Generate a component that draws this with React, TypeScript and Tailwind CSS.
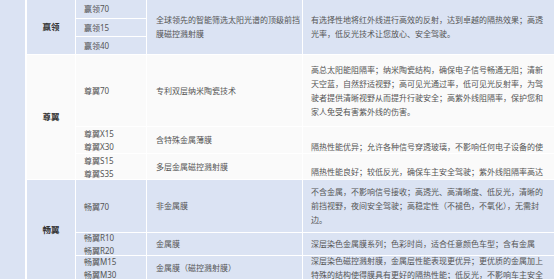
const font = { fontFamily: '"Noto Sans", "Noto Sans CJK SC", sans-serif' };

type Row = { models: string[]; tech: string; desc: string[]; descPad?: string };

const blue = "bg-[#dbe3f3]";
const white = "bg-[#fafafa]";

function Brand({ name, tone }: { name: string; tone: string }) {
  return (
    <div className={`${tone} row-span-3 flex items-center justify-center text-[8.5px] font-bold text-[#333]`}>
      {name}
    </div>
  );
}

function Group({
  brand,
  tone,
  rows,
  heights,
}: {
  brand: string;
  tone: string;
  rows: Row[];
  heights: string;
}) {
  return (
    <div className={`grid grid-cols-[48px_70px_155px_1fr] gap-px ${heights}`}>
      <Brand name={brand} tone={tone} />
      {rows.map((r, i) => (
        <Cells key={i} row={r} tone={tone} />
      ))}
    </div>
  );
}

function Cells({ row, tone }: { row: Row; tone: string }) {
  return (
    <>
      <div className={`${tone} flex flex-col justify-center overflow-hidden pl-[8px] text-[8px] leading-[13px] text-[#555]`}>
        {row.models.map((m) => (
          <span key={m}>{m}</span>
        ))}
      </div>
      <div className={`${tone} flex items-center overflow-hidden pl-[9px] text-[8px] leading-[14px] text-[#555]`}>
        <p className="w-[145px]">{row.tech}</p>
      </div>
      <div className={`${tone} flex items-center overflow-hidden pl-[8px] text-[8px] leading-[14px] text-[#555] ${row.descPad ?? ""}`}>
        <div className="w-[236px]">
          {row.desc.map((d) => (
            <p key={d}>{d}</p>
          ))}
        </div>
      </div>
    </>
  );
}

function SingleSpan({ row, tone }: { row: Row; tone: string }) {
  return (
    <>
      {row.models.map((m, i) => (
        <div
          key={m}
          className={`${tone} col-start-2 flex items-center pl-[8px] text-[8px] text-[#555]`}
          style={{ gridRowStart: i + 1 }}
        >
          {m}
        </div>
      ))}
      <div className={`${tone} col-start-3 row-span-3 row-start-1 flex items-center pl-[9px] text-[8px] leading-[14px] text-[#555]`}>
        <p className="w-[145px]">{row.tech}</p>
      </div>
      <div className={`${tone} col-start-4 row-span-3 row-start-1 flex items-center pl-[8px] text-[8px] leading-[14px] text-[#555]`}>
        <div className="w-[236px]">
          {row.desc.map((d) => (
            <p key={d}>{d}</p>
          ))}
        </div>
      </div>
    </>
  );
}

export default function App() {
  return (
    <div className="flex h-[279px] w-[554px] overflow-hidden bg-white" style={font}>
      <div className={`w-[25px] shrink-0 ${blue}`} />
      <div className="ml-[2px] flex flex-1 flex-col gap-px">
        <div className="grid grid-cols-[48px_70px_155px_1fr] grid-rows-[18px_17px_17px] gap-px">
          <div className={`${blue} col-start-1 row-span-3 row-start-1 flex items-center justify-center text-[8.5px] font-bold text-[#333]`}>
            赢领
          </div>
          <SingleSpan
            tone={blue}
            row={{
              models: ["赢领70", "赢领15", "赢领40"],
              tech: "全球领先的智能筛选太阳光谱的顶级前挡膜磁控溅射膜",
              desc: [
                "有选择性地将红外线进行高效的反射，达到卓越的隔热效果；高透",
                "光率，低反光技术让您放心、安全驾驶。",
              ],
            }}
          />
        </div>

        <Group
          brand="尊翼"
          tone={white}
          heights="grid-rows-[71px_26px_25px]"
          rows={[
            {
              models: ["尊翼70"],
              tech: "专利双层纳米陶瓷技术",
              desc: [
                "高总太阳能阻隔率；纳米陶瓷结构，确保电子信号畅通无阻；清新",
                "天空蓝，自然舒适视野；高可见光通过率，低可见光反射率，为驾",
                "驶者提供清晰视野从而提升行驶安全；高紫外线阻隔率，保护您和",
                "家人免受有害紫外线的伤害。",
              ],
            },
            {
              models: ["尊翼X15", "尊翼X30"],
              tech: "含特殊金属薄膜",
              desc: ["隔热性能优异；允许各种信号穿透玻璃，不影响任何电子设备的使"],
              descPad: "pt-[14px]",
            },
            {
              models: ["尊翼S15", "尊翼S35"],
              tech: "多层金属磁控溅射膜",
              desc: ["隔热性能良好；较低反光，确保车主安全驾驶；紫外线阻隔率高达"],
              descPad: "pt-[10px]",
            },
          ]}
        />

        <Group
          brand="畅翼"
          tone={blue}
          heights="grid-rows-[52px_22px_24px]"
          rows={[
            {
              models: ["畅翼70"],
              tech: "非金属膜",
              desc: [
                "不含金属，不影响信号接收；高透光、高清晰度、低反光，清晰的",
                "前挡视野，夜间安全驾驶；高稳定性（不褪色，不氧化），无需封",
                "边。",
              ],
            },
            {
              models: ["畅翼R10", "畅翼R20"],
              tech: "金属膜",
              desc: ["深层染色金属膜系列；色彩时尚，适合任意颜色车型；含有金属"],
            },
            {
              models: ["畅翼M15", "畅翼M30"],
              tech: "金属膜（磁控溅射膜）",
              desc: [
                "深层染色磁控溅射膜，金属层性能表现更优异；更优质的金属加上",
                "特殊的结构使得膜具有更好的隔热性能；低反光，不影响车主安全",
              ],
            },
          ]}
        />
        <div className={`h-[20px] ${white}`} />
      </div>
    </div>
  );
}
